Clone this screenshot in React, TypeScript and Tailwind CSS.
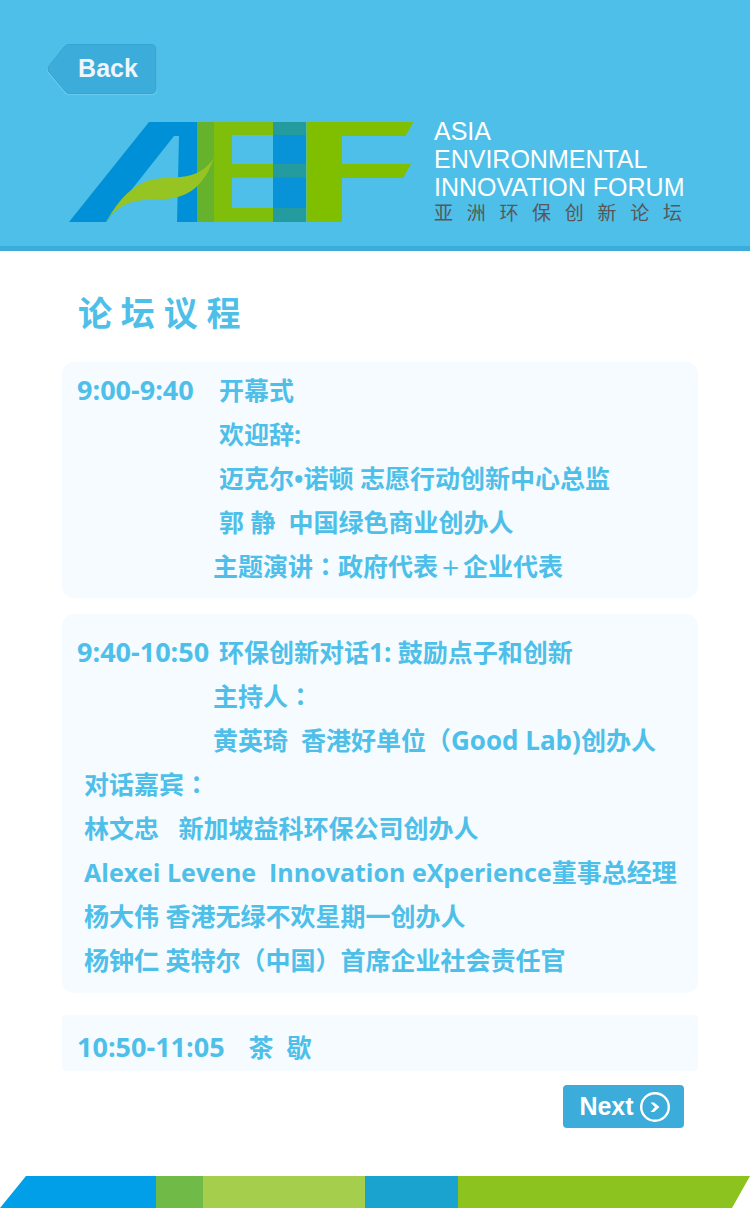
import type { ReactNode } from "react";

function En({ children }: { children: ReactNode }) {
  return <span className="text-[26px] leading-none">{children}</span>;
}

function Time({ children }: { children: ReactNode }) {
  return <span className="text-[27px] leading-none">{children}</span>;
}

function Mark({ children }: { children: ReactNode }) {
  return <span className="font-['Noto_Sans_CJK_TC',sans-serif] leading-none">{children}</span>;
}

type RowProps = { time?: string; indent: "wide" | "narrow" | "none"; children: ReactNode };

const timeWidth = { wide: "w-[142px]", narrow: "w-[136px]", none: "w-[7px]" };

function Row({ time, indent, children }: RowProps) {
  return (
    <li className="flex h-11 leading-[44px] whitespace-pre">
      <span className={`shrink-0 ${timeWidth[indent]}`}>{time && <Time>{time}</Time>}</span>
      <span>{children}</span>
    </li>
  );
}

function Logo() {
  return (
    <svg className="h-[100px] w-[345px] shrink-0" viewBox="69 122 345 100" aria-hidden="true">
      <path fill="#0090d8" d="M149 122H197V222H177L179 136H174L106 222H69Z" />
      <path fill="#7fbe0a" d="M214 122H273V135H232V164H273V177.500H232V208H273V222H214Z" />
      <path fill="#66b22d" d="M197 122H214V222H197Z" />
      <path fill="#0893d8" d="M273 122H306V222H273Z" />
      <path fill="#239b9f" d="M273 122H306V135H273ZM273 164H306V177.500H273ZM273 208H306V222H273Z" />
      <path fill="#80be00" d="M306.500 122H413.500L405.500 136H342V164H411L403 178H342V222H306.500Z" />
      <path
        fill="#95c423"
        d="M106 222C115 206 124 195 135 187C148 178 162 178 178 177.300C197 176 206 169 214 158C208 174 199 191 178 197C166 200.500 153 198.500 140 200.500C124 203 115 209 106 222Z"
      />
    </svg>
  );
}

export default function App() {
  return (
    <div className="bg-white font-['Open_Sans','Noto_Sans_CJK_SC',sans-serif] text-[#4ebfe9]">
      <header className="border-b-[5px] border-[#3cacda] bg-[#4ebfe9] pt-[43px]">
        <button
          type="button"
          className="relative ml-[47px] flex h-[52px] w-[110px] items-center justify-center pl-3 font-['Liberation_Sans',sans-serif] text-[25px] font-bold text-[#eef6fc]"
        >
          <svg className="absolute inset-0 h-full w-full" viewBox="0 0 110 52" aria-hidden="true">
            <path fill="#68cbf0" d="M20 2H104Q110 2 110 8V46Q110 52 104 52H22Q19 52 17 49L1 30Q-1 27 1 24L16 5Q18 2 20 2Z" />
            <path fill="#3cacda" stroke="#36a3d1" d="M21.500 1.500H104Q109 1.500 109 7V45Q109 50.500 104 50.500H22Q20 50.500 18 48L2 29Q0 26 2 23L17 4Q19 1.500 21.500 1.500Z" />
          </svg>
          <span className="relative">Back</span>
        </button>
        <div className="mt-[27px] flex h-[124px] pl-[69px]">
          <Logo />
          <div className="ml-5 w-[248px] font-['Liberation_Sans','Noto_Sans_CJK_SC',sans-serif] text-white">
            <p className="-mt-[5px] text-[25px] leading-7">
              ASIA
              <br />
              ENVIRONMENTAL
              <br />
              <span className="whitespace-nowrap">INNOVATION FORUM</span>
            </p>
            <p className="flex justify-between pt-px text-[19px] leading-6 text-[#595757]">
              {Array.from("亚洲环保创新论坛").map((c) => (
                <span key={c}>{c}</span>
              ))}
            </p>
          </div>
        </div>
      </header>

      <main className="pr-[52px] pl-[62px]">
        <h1 className="pt-[38px] pl-4 text-[34px] leading-[48px] font-bold">论 坛 议 程</h1>

        <div className="mt-[25px] text-[25px] font-bold">
          <ul className="rounded-xl bg-[#f5fbff] px-[15px] pt-1.5 pb-2.5">
            <Row time="9:00-9:40" indent="wide">开幕式</Row>
            <Row indent="wide">欢迎辞:</Row>
            <Row indent="wide">迈克尔•诺顿 志愿行动创新中心总监</Row>
            <Row indent="wide">郭 静  中国绿色商业创办人</Row>
            <Row indent="narrow">
              主题演讲<Mark>：</Mark>政府代表
              <span className="inline-block w-[25px] text-center text-xl leading-none">＋</span>
              企业代表
            </Row>
          </ul>

          <ul className="mt-4 rounded-xl bg-[#f5fbff] px-[15px] pt-4 pb-[11px]">
            <Row time="9:40-10:50" indent="wide">环保创新对话<En>1:</En> 鼓励点子和创新</Row>
            <Row indent="narrow">主持人<Mark>：</Mark></Row>
            <Row indent="narrow">黄英琦  香港好单位（<En>Good Lab)</En>创办人</Row>
            <Row indent="none">对话嘉宾<Mark>：</Mark></Row>
            <Row indent="none">林文忠   新加坡益科环保公司创办人</Row>
            <Row indent="none">Alexei Levene  Innovation eXperience董事总经理</Row>
            <Row indent="none">杨大伟 香港无绿不欢星期一创办人</Row>
            <Row indent="none">杨钟仁 英特尔（中国）首席企业社会责任官</Row>
          </ul>

          <p className="mt-[22px] flex h-14 gap-6 rounded bg-[#f5fbff] px-[15px] pt-2.5 leading-[44px] whitespace-pre">
            <span>
              <Time>10:50-11:05</Time>
            </span>
            <span>茶  歇</span>
          </p>
        </div>

        <div className="mt-[14px] flex justify-end pr-[14px]">
          <button
            type="button"
            className="flex h-[43px] w-[121px] items-center justify-center gap-1.5 rounded bg-[#3cacda] pl-0.5 font-['Liberation_Sans',sans-serif] text-[25px] font-bold text-white"
          >
            Next
            <svg className="h-[30px] w-[30px]" viewBox="0 0 30 30" fill="none" stroke="#fff" aria-hidden="true">
              <circle cx="15" cy="15" r="13.800" strokeWidth="2.400" />
              <path fill="#fff" stroke="none" d="M10.500 10.500H14L19.500 15L14 20H10.500L15 15Z" />
            </svg>
          </button>
        </div>
      </main>

      <footer className="mt-12">
        <svg className="block h-8 w-full" viewBox="0 0 750 32" preserveAspectRatio="none" aria-hidden="true">
          <path fill="#019fe8" d="M26 0H156V32H0Z" />
          <path fill="#70bb48" d="M156 0H203V32H156Z" />
          <path fill="#a5ce4c" d="M203 0H365V32H203Z" />
          <path fill="#1ba3cf" d="M365 0H458V32H365Z" />
          <path fill="#8cc31f" d="M458 0H750L732 32H458Z" />
        </svg>
      </footer>
    </div>
  );
}
